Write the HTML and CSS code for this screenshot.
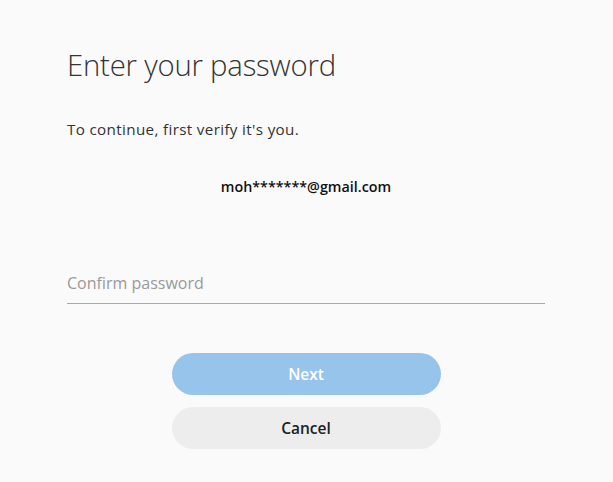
FILE: index.html
```html
<!DOCTYPE html>
<html lang="en">
<head>
  <meta charset="UTF-8">
  <title>Enter your password</title>
  <link rel="stylesheet" href="styles.css">
</head>
<body>
  <div class="box">
    <h1>Enter your password</h1>
    <p class="sub">To continue, first verify it's you.</p>
    <p class="email">moh*******@gmail.com</p>
    <div class="field">
      <input type="password" placeholder="Confirm password">
    </div>
    <div class="btns">
      <button class="next">Next</button>
      <button class="cancel">Cancel</button>
    </div>
  </div>
</body>
</html>
```

FILE: styles.css
```css
*{margin: 0; padding: 0; box-sizing: border-box;}
body{background: #fafafa; font-family: "Open Sans", "Liberation Sans", sans-serif; color: #222;}
div.box{width: 478px; margin: 0 0 0 67px; padding-top: 45px;}
h1{font-size: 29.3px; font-weight: 300; color: #333; line-height: 40px; letter-spacing: -0.2px;}
p.sub{margin-top: 34px; font-size: 15.2px; letter-spacing: 0.35px; color: #333; line-height: 20px;}
p.email{margin-top: 38px; font-size: 14.3px; font-weight: 600; text-align: center; color: #111; line-height: 20px;}
div.field{margin-top: 70px; border-bottom: 1px solid #a8a8a8;}
div.field input{width: 100%; height: 36px; border: none; background: transparent; font-family: inherit; font-size: 16px; outline: none; padding-bottom: 4px;}
div.field input::placeholder{color: #999;}
div.btns{display: flex; flex-direction: column; align-items: center; gap: 12px; margin-top: 49px;}
button{width: 269px; height: 42px; border: none; border-radius: 21px; font-family: inherit; font-size: 15.5px; font-weight: 600; cursor: pointer;}
button.next{background: #97c4ea; color: #fff;}
button.cancel{background: #ededed; color: #222;}
```
